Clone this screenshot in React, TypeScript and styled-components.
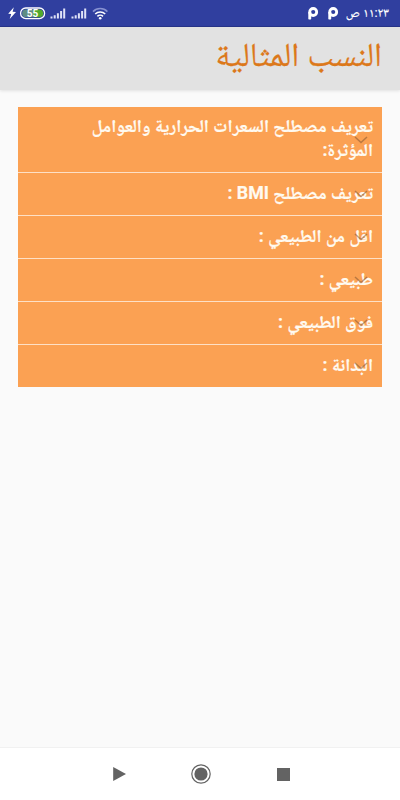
import React from "react";
import styled, { createGlobalStyle } from "styled-components";

const GlobalStyle = createGlobalStyle`
  * { box-sizing: border-box; }
  body { margin: 0; background: #fafafa; }
`;

const Screen = styled.div`
  display: flex;
  flex-direction: column;
  width: 400px;
  height: 800px;
  overflow: hidden;
  background: #fafafa;
  font-family: Roboto, "Noto Naskh Arabic", "DejaVu Sans", sans-serif;
`;

const StatusBar = styled.div`
  display: flex;
  align-items: center;
  justify-content: space-between;
  flex: none;
  height: 27px;
  padding: 0 11px 0 7px;
  background: #303f9f;
  border-bottom: 1px solid #27348a;
  color: #fff;
`;

const StatusGroup = styled.div`
  display: flex;
  align-items: center;
`;

const Clock = styled.span`
  width: 43px;
  margin-left: 3px;
  font-size: 12.8px;
  line-height: 26px;
  white-space: nowrap;
  -webkit-text-stroke: 0.2px #fff;
`;

const Header = styled.header`
  flex: none;
  height: 63px;
  padding-right: 18px;
  background: #e2e2e2;
  box-shadow: 0 1px 3px rgba(0, 0, 0, 0.1);
`;

const Title = styled.h1`
  margin: 0;
  color: #dc781a;
  font-size: 33.5px;
  font-weight: 400;
  line-height: 56px;
  white-space: nowrap;
  -webkit-text-stroke: 0.25px #dc781a;
`;

const List = styled.main`
  flex: 1;
  padding: 17px 18px 0;
`;

const Row = styled.section<{ $tall?: boolean }>`
  position: relative;
  height: ${(p) => (p.$tall ? 66 : 43)}px;
  padding: ${(p) => (p.$tall ? 7 : 8)}px 9px 0;
  background: #fba153;
  border-bottom: 1px solid #fde0c6;
  &:last-child {
    height: 42px;
    border-bottom: 0;
  }
`;

const Label = styled.div`
  color: #fffaf0;
  font-size: 17.8px;
  font-weight: 700;
  line-height: 24px;
  white-space: nowrap;
  -webkit-text-stroke: 0.2px #fffaf0;
`;

const Chevron = styled.svg`
  position: absolute;
  right: 14px;
  top: 50%;
  width: 14px;
  height: 8px;
  margin-top: -4px;
  opacity: 0.5;
`;

const NavBar = styled.nav`
  display: flex;
  flex: none;
  align-items: center;
  justify-content: space-between;
  height: 53px;
  padding: 0 110px 0 113px;
  background: #fff;
  border-top: 1px solid #f1f1f1;
`;

const rows = [
  ["تعريف مصطلح السعرات الحرارية والعوامل", "المؤثرة:"],
  ["تعريف مصطلح BMI :"],
  ["اقل من الطبيعي :"],
  ["طبيعي :"],
  ["فوق الطبيعي :"],
  ["البدانة :"],
];

const Signal = () => (
  <svg width="20.5" height="14" viewBox="0 0 20.5 14" fill="#dfe3f7">
    <path d="M.5 10.5h2v2h-2zM3.7 9.2h2v3.3h-2zM6.9 7.2h2v5.3h-2zM10.1 5h2v7.5h-2zM13.2 2.5h2v10h-2z" />
  </svg>
);

const Parking = () => (
  <svg width="20" height="14" viewBox="0 0 20 14">
    <circle cx="10.2" cy="6" r="3.5" fill="none" stroke="#fff" strokeWidth="2.8" />
    <path d="M5.3 6h2.9v6.4q0 1.2-1.45 1.2T5.3 12.4z" fill="#fff" />
  </svg>
);

export default function App() {
  return (
    <>
      <GlobalStyle />
      <Screen>
        <StatusBar>
          <StatusGroup>
            <svg width="10" height="14" viewBox="0 0 10 14">
              <path d="M6.8 1.2 1.2 7.8l3 .2-1.5 5L9 6l-3.4-.2z" fill="#fff" />
            </svg>
            <svg width="33" height="14" viewBox="0 0 33 14">
              <rect x="3.6" y="2" width="24" height="10.6" rx="5.2" fill="#303f9f" stroke="#fff" strokeWidth="1.3" />
              <path d="M9 3.4h8v7.8H9a3.9 3.9 0 0 1 0-7.8z" fill="#5f8d83" />
              <path d="M16 3.4h6.3a3.9 3.9 0 0 1 0 7.8H16z" fill="#52aa2c" />
              <text x="15.4" y="10.9" textAnchor="middle" fill="#fff" fontFamily="Roboto" fontSize="10" fontWeight="700">55</text>
            </svg>
            <Signal />
            <Signal />
            <svg width="20" height="14" viewBox="0 0 20 14" fill="none" strokeWidth="1.6">
              <path d="M2 5.6a10 10 0 0 1 14.4 0" stroke="#8792d1" />
              <path d="M4.2 8a7.2 7.2 0 0 1 10 0M6.4 10.4a4 4 0 0 1 5.6 0" stroke="#fff" />
              <circle cx="9.2" cy="12.2" r="1.3" fill="#fff" />
            </svg>
          </StatusGroup>
          <StatusGroup>
            <Parking />
            <Parking />
            <Clock dir="rtl">١١:٢٣ ص</Clock>
          </StatusGroup>
        </StatusBar>
        <Header dir="rtl">
          <Title>النسب المثالية</Title>
        </Header>
        <List dir="rtl">
          {rows.map((lines) => (
            <Row key={lines[0]} $tall={lines.length > 1}>
              {lines.map((line) => (
                <Label key={line}>{line}</Label>
              ))}
              <Chevron viewBox="0 0 14 8">
                <path d="M1 1l6 5.5L13 1" fill="none" stroke="#7a5130" strokeWidth="1.5" />
              </Chevron>
            </Row>
          ))}
        </List>
        <NavBar>
          <svg width="14" height="16" viewBox="0 0 14 16"><path d="M.2 1v14L13 8z" fill="#636363" /></svg>
          <svg width="22" height="20" viewBox="0 0 22 20">
            <circle cx="10" cy="10" r="9.2" fill="none" stroke="#636363" strokeWidth="1.2" />
            <circle cx="10" cy="10" r="6.6" fill="#636363" />
          </svg>
          <svg width="13" height="13" viewBox="0 0 13 13"><path d="M0 0h13v13H0z" fill="#636363" /></svg>
        </NavBar>
      </Screen>
    </>
  );
}
